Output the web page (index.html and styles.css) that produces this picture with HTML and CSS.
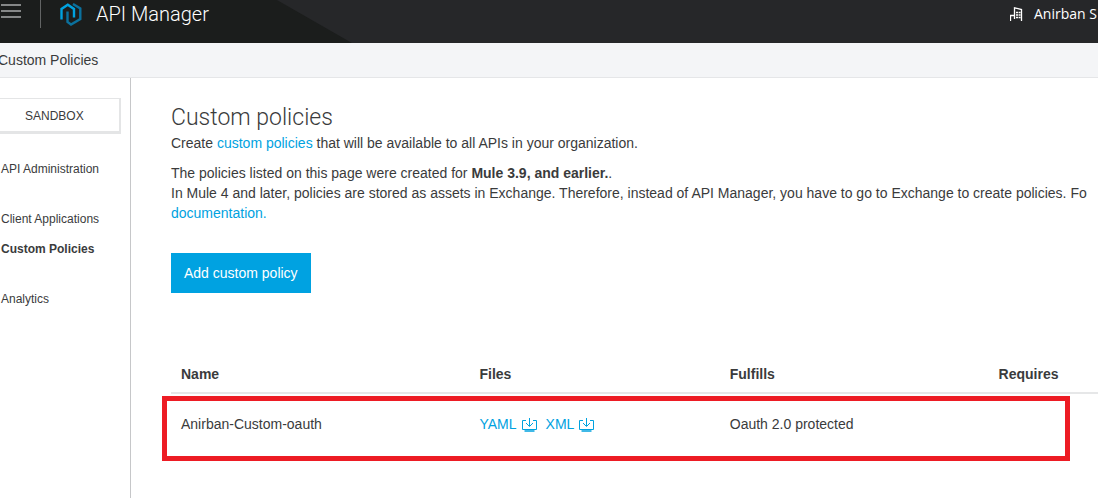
FILE: index.html
```html
<!DOCTYPE html>
<html lang="en">
<head>
<meta charset="utf-8">
<meta name="viewport" content="width=device-width, initial-scale=1">
<title>API Manager</title>
<link rel="stylesheet" href="styles.css">
</head>
<body>
<header class="topbar">
  <div class="brand">
    <button class="menu-button" type="button" aria-label="Menu">
      <svg width="20" height="14" viewBox="0 0 20 14"><path d="M0 1h20M0 7h20M0 13h20" stroke="#a9abab" stroke-width="1.5"/></svg>
    </button>
    <span class="divider"></span>
    <svg class="logo" width="22" height="23" viewBox="0 0 22 23" fill="none" stroke-width="2.4">
      <path d="M13 1L20.300 5.500V16L11 21.500L7.500 19V8.500" stroke="#0b719d"/>
      <path d="M1.500 16.500V6L7.800 1.700L14 6V14.500" stroke="#00a2df"/>
    </svg>
    <span class="product">API Manager</span>
  </div>
  <div class="user">
    <svg width="13" height="15" viewBox="0 0 13 15" fill="none" stroke="#fff">
      <path d="M.5 14V8.500H4.500M4.500 12V.800L11.500 2.500V14" stroke-width="1.300"/>
      <path d="M6 5.500h5M6 8h5M6 10.500h5" stroke-width="1.500" stroke-dasharray="2 .6"/>
    </svg>
    <span>Anirban S</span>
  </div>
</header>
<div class="crumbs">Custom Policies</div>
<div class="layout">
  <nav class="sidebar">
    <button class="environment" type="button">SANDBOX</button>
    <a href="#admin">API Administration</a>
    <a class="group" href="#clients">Client Applications</a>
    <a class="current" href="#policies">Custom Policies</a>
    <a class="group" href="#analytics">Analytics</a>
  </nav>
  <main class="content">
    <h1>Custom policies</h1>
    <p>Create <a href="#about">custom policies</a> that will be available to all APIs in your organization.</p>
    <p>The policies listed on this page were created for <strong>Mule 3.9, and earlier.</strong>.<br>
    In Mule 4 and later, policies are stored as assets in Exchange. Therefore, instead of API Manager, you have to go to Exchange to create policies. Fo<br>
    <a href="#docs">documentation.</a></p>
    <button class="add" type="button">Add custom policy</button>
    <div class="table-wrap">
      <table>
        <thead>
          <tr><th class="name">Name</th><th class="files">Files</th><th class="fulfills">Fulfills</th><th>Requires</th></tr>
        </thead>
        <tbody>
          <tr>
            <td>Anirban-Custom-oauth</td>
            <td>
              <div class="downloads">
                <a href="#yaml">YAML
                  <svg width="15" height="15" viewBox="0 0 15 15" fill="none" stroke="currentColor"><path d="M4 3.500H.5V12.500H14.500V3.500H11M7.500 1V9M4 6L7.500 9.500L11 6"/><path d="M2.500 14H12.500" stroke-width="1.500"/></svg></a>
                <a href="#xml">XML
                  <svg width="15" height="15" viewBox="0 0 15 15" fill="none" stroke="currentColor"><path d="M4 3.500H.5V12.500H14.500V3.500H11M7.500 1V9M4 6L7.500 9.500L11 6"/><path d="M2.500 14H12.500" stroke-width="1.500"/></svg></a>
              </div>
            </td>
            <td>Oauth 2.0 protected</td>
            <td></td>
          </tr>
        </tbody>
      </table>
      <div class="highlight"></div>
    </div>
  </main>
</div>
</body>
</html>
```
FILE: styles.css
```css
* { box-sizing: border-box; }
body {
  margin: 0;
  min-height: 100vh;
  display: flex;
  flex-direction: column;
  overflow: hidden;
  background: #fff;
  color: #3a3b3c;
  font: 14px/20px "Liberation Sans", Arial, sans-serif;
}
a { color: #00a2df; text-decoration: none; }
button { font: inherit; cursor: pointer; }
.topbar {
  display: flex;
  justify-content: space-between;
  background: #262729;
  color: #fff;
}
.brand {
  display: flex;
  align-items: flex-start;
  height: 43px;
  padding-right: 143px;
  background: #1b1d1c;
  clip-path: polygon(0 0, calc(100% - 75px) 0, 100% 100%, 0 100%);
}
.menu-button {
  display: flex;
  padding: 4px 0 0 1px;
  border: 0;
  background: none;
}
.divider {
  width: 1px;
  height: 28px;
  margin-left: 19px;
  background: #626464;
}
.logo { margin: 3px 14px 0 19px; }
.product {
  font: 300 20px/28px Roboto, sans-serif;
}
.user {
  display: flex;
  align-items: center;
  gap: 11px;
  height: 28px;
  width: 88px;
  font-family: "Open Sans", sans-serif;
  white-space: nowrap;
}
.user svg { flex: none; }
.crumbs {
  height: 35px;
  line-height: 34px;
  border-bottom: 1px solid #e5e6e8;
  background: #f4f5f7;
  text-indent: -2px;
}
.layout {
  display: grid;
  grid-template-columns: 131px minmax(0, 1fr);
  flex: 1;
}
.sidebar {
  display: flex;
  flex-direction: column;
  padding: 20px 9px 0 0;
  border-right: 1px solid #c6c7c9;
  font-size: 12px;
}
.environment {
  height: 36px;
  margin-bottom: 25px;
  padding: 2px 38px 0 25px;
  border: 1px solid #e4e5e6;
  border-left: 0;
  border-right-width: 2px;
  border-bottom-width: 3px;
  background: #fff;
  color: inherit;
  text-align: left;
}
.sidebar a {
  padding-left: 1px;
  margin-bottom: 10px;
  color: inherit;
}
.sidebar .group { margin-top: 20px; }
.sidebar .current { font-weight: bold; }
.content { padding: 24px 0 0 40px; }
h1 {
  margin: 0;
  font: 300 23px/31px Roboto, sans-serif;
}
p {
  margin: 0 0 10px;
  white-space: nowrap;
}
.add {
  height: 40px;
  margin: 20px 0 61px;
  padding: 0 13px;
  border: 0;
  background: #00a2e1;
  color: #fff;
}
.table-wrap { position: relative; }
table {
  width: 100%;
  table-layout: fixed;
  border-collapse: collapse;
}
th, td {
  padding: 10px;
  text-align: left;
}
th {
  padding-bottom: 8px;
  border-bottom: 2px solid #e6e7e8;
}
td { padding: 20px 10px; }
.name { width: 32.2%; }
.files { width: 27%; }
.fulfills { width: 29%; }
.downloads { display: flex; gap: 9px; }
.downloads a {
  display: flex;
  align-items: center;
  gap: 5px;
}
.highlight {
  position: absolute;
  top: 42px;
  bottom: -7px;
  left: -9px;
  right: 28px;
  border: 5px solid #ed1c24;
  pointer-events: none;
}
```
